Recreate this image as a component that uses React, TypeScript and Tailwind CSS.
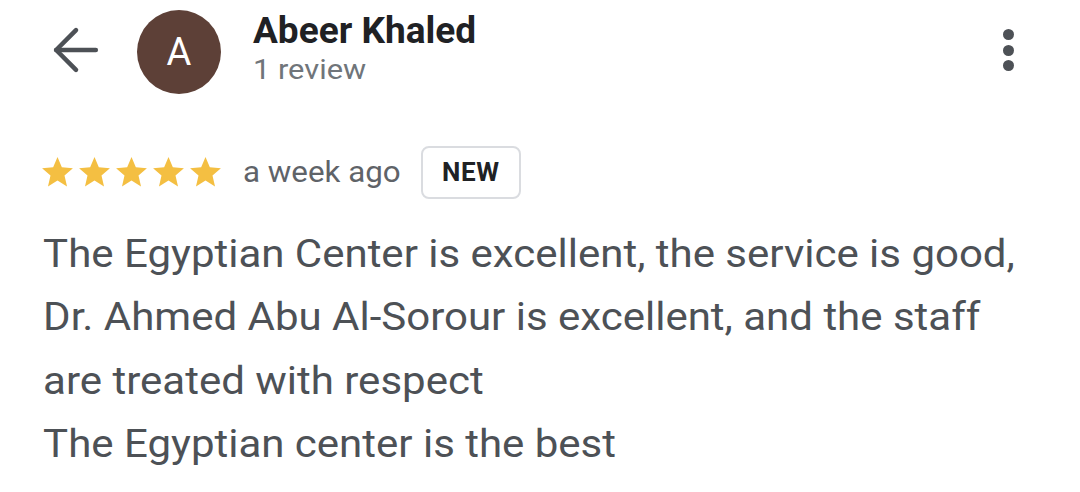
import { ArrowLeft } from "lucide-react";

const Star = () => (
  <svg viewBox="0 0 24 24" className="w-[37px] h-[37px] shrink-0" fill="#f4bf42">
    <path d="M12 17.27 18.18 21l-1.64-7.03L22 9.24l-7.19-.61L12 2 9.19 8.63 2 9.24l5.46 4.73L5.82 21z" />
  </svg>
);

const App = () => {
  return (
    <div
      className="w-[1080px] h-[492px] bg-white overflow-hidden"
      style={{ fontFamily: "Roboto, 'Noto Sans', sans-serif" }}
    >
      {/* Header */}
      <div className="flex items-center h-[104px] pl-[42px] pr-[52px]">
        <ArrowLeft className="w-[68px] h-[68px] text-[#4d5156] -mt-[4px]" strokeWidth={1.6} />
        <div className="ml-[27px] w-[84px] h-[84px] rounded-full bg-[#5d4037] flex items-center justify-center text-white text-[38px]">
          A
        </div>
        <div className="ml-[32px] flex flex-col -mt-[8px]">
          <div className="text-[37px] leading-[44px] font-bold text-[#202124]">Abeer Khaled</div>
          <div className="text-[28px] leading-[34px] text-[#70757a] scale-x-[1.1] origin-left">1 review</div>
        </div>
        <div className="ml-auto flex flex-col gap-[4.5px] items-center -mt-[4px] mr-[14px]">
          <span className="w-[11px] h-[11px] rounded-full bg-[#4d5156]" />
          <span className="w-[11px] h-[11px] rounded-full bg-[#4d5156]" />
          <span className="w-[11px] h-[11px] rounded-full bg-[#4d5156]" />
        </div>
      </div>

      {/* Rating row */}
      <div className="flex items-center mt-[42px] pl-[39px]">
        <div className="flex items-center">
          <Star />
          <Star />
          <Star />
          <Star />
          <Star />
        </div>
        <span className="ml-[19px] text-[29px] text-[#5f6368] scale-x-[1.08] origin-left">a week ago</span>
        <span className="ml-[32px] px-[19px] h-[53px] flex items-center rounded-[8px] border-2 border-[#dadce0] text-[26px] font-bold text-[#202124] tracking-wide">
          NEW
        </span>
      </div>

      {/* Review text */}
      <div className="mt-[24px] pl-[39px] text-[38px] leading-[63.3px] text-[#4d5156] scale-x-[1.105] origin-left">
        <p>The Egyptian Center is excellent, the service is good,</p>
        <p>Dr. Ahmed Abu Al-Sorour is excellent, and the staff</p>
        <p>are treated with respect</p>
        <p>The Egyptian center is the best</p>
      </div>
    </div>
  );
};

export default App;
